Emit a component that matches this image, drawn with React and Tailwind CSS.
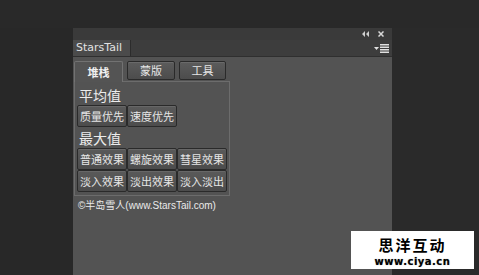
import React from "react";

const cjk = { fontFamily: '"Noto Sans CJK SC", "Liberation Sans", sans-serif' };

function Btn({ children }) {
  return (
    <div
      className="w-[50px] h-[22px] flex items-center justify-center border border-[#2a2a2a] rounded-[2px] bg-gradient-to-b from-[#5a5a5a] to-[#4c4c4c] text-[11px] text-[#e6e6e6] shadow-[inset_0_1px_0_#676767] leading-none"
      style={cjk}
    >
      {children}
    </div>
  );
}

export default function App() {
  return (
    <div className="relative w-[479px] h-[275px] bg-[#292929] overflow-hidden flex flex-col" style={cjk}>
      <div className="h-[28px] shrink-0" />
      <div className="flex flex-1">
        <div className="w-[73px] shrink-0 bg-[#282828]" />
        <div className="w-[319px] shrink-0 flex flex-col bg-[#535353]">
          {/* header */}
          <div className="h-[12px] bg-[#3a3a3a] flex items-center justify-end gap-[9px] pr-[8px] text-[#d0d0d0]">
            <svg width="7" height="6" viewBox="0 0 7 6">
              <path d="M3 0 L0 3 L3 6 Z M7 0 L4 3 L7 6 Z" fill="#cfcfcf" />
            </svg>
            <svg width="6" height="6" viewBox="0 0 6 6">
              <path d="M0.5 0.5 L5.5 5.5 M5.5 0.5 L0.5 5.5" stroke="#d8d8d8" strokeWidth="1.5" />
            </svg>
          </div>
          {/* tab row */}
          <div className="h-[17px] bg-[#3d3d3d] flex items-end border-b border-[#2f2f2f]">
            <div
              className="h-[16px] w-[58px] bg-[#4b4b4b] border-r border-[#2c2c2c] flex items-center pl-[3px] text-[#e2e2e2]"
              style={{ fontFamily: '"DejaVu Sans", "Liberation Sans", sans-serif', fontSize: "11px" }}
            >
              StarsTail
            </div>
            <div className="flex-1 h-full flex items-center justify-end pr-[3px]">
              <svg width="15" height="9" viewBox="0 0 15 9">
                <path d="M0 3 L5 3 L2.5 6 Z" fill="#e0e0e0" />
                <rect x="6" y="0" width="9" height="1.5" fill="#e0e0e0" />
                <rect x="6" y="2.5" width="9" height="1.5" fill="#e0e0e0" />
                <rect x="6" y="5" width="9" height="1.5" fill="#e0e0e0" />
                <rect x="6" y="7.5" width="9" height="1.5" fill="#e0e0e0" />
              </svg>
            </div>
          </div>
          {/* body */}
          <div className="pt-[3px] pl-[1px] flex flex-col">
            <div className="flex items-end gap-[4px] h-[21px]">
              <div className="w-[49px] h-[21px] bg-[#545454] border border-[#727272] border-b-0 rounded-t-[2px] flex items-center justify-center text-[11px] font-bold text-[#f0f0f0] relative z-10 -mb-px">
                堆栈
              </div>
              <div className="w-[48px] h-[19px] mb-[1px] border border-[#2a2a2a] rounded-[2px] bg-gradient-to-b from-[#5c5c5c] to-[#4c4c4c] shadow-[inset_0_1px_0_#6a6a6a] flex items-center justify-center text-[11px] text-[#e6e6e6]">
                蒙版
              </div>
              <div className="w-[47px] h-[19px] mb-[1px] border border-[#2a2a2a] rounded-[2px] bg-gradient-to-b from-[#5c5c5c] to-[#4c4c4c] shadow-[inset_0_1px_0_#6a6a6a] flex items-center justify-center text-[11px] text-[#e6e6e6]">
                工具
              </div>
            </div>
            <div className="w-[156px] h-[115px] border border-[#6c6c6c] pl-[2px] pt-[5px] flex flex-col">
              <div className="text-[14px] leading-[16px] text-[#ececec] pl-[2px]">平均值</div>
              <div className="flex mt-[2px]">
                <Btn>质量优先</Btn>
                <Btn>速度优先</Btn>
              </div>
              <div className="text-[14px] leading-[16px] text-[#ececec] pl-[2px] mt-[3px]">最大值</div>
              <div className="grid grid-cols-[50px_50px_50px] mt-[2px]">
                <Btn>普通效果</Btn>
                <Btn>螺旋效果</Btn>
                <Btn>彗星效果</Btn>
                <Btn>淡入效果</Btn>
                <Btn>淡出效果</Btn>
                <Btn>淡入淡出</Btn>
              </div>
            </div>
            <div
              className="pl-[4px] mt-[2px] text-[10px] text-[#eaeaea]"
              style={{ fontFamily: '"Liberation Sans", "Noto Sans CJK SC", sans-serif' }}
            >
              ©半岛雪人(www.StarsTail.com)
            </div>
          </div>
        </div>
        <div className="flex-1 bg-[#2a2a2a]" />
      </div>
      {/* watermark */}
      <div className="absolute left-[351px] top-[231px] w-[123px] h-[38px] bg-white flex flex-col items-center pt-[6px]">
        <div className="text-[15px] leading-[15px] font-bold text-black tracking-[2px]" style={cjk}>
          思洋互动
        </div>
        <div
          className="text-[10px] leading-[10px] font-bold text-black mt-[5px] tracking-[0.5px]"
          style={{ fontFamily: '"DejaVu Sans", sans-serif', textShadow: "0 0 1px #888" }}
        >
          www.ciya.cn
        </div>
      </div>
    </div>
  );
}
